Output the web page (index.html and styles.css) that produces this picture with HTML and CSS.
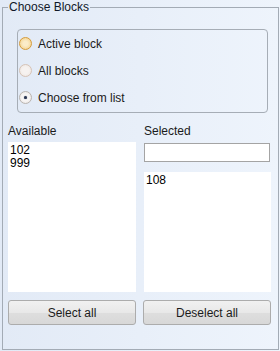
FILE: index.html
```html
<!DOCTYPE html>
<html lang="en">
<head>
    <meta charset="UTF-8">
    <title>Choose Blocks</title>
    <link rel="stylesheet" href="styles.css">
</head>
<body>
    <fieldset class="group">
        <legend>Choose Blocks</legend>

        <div class="options">
            <label class="opt"><span class="radio hot"></span>Active block</label>
            <label class="opt"><span class="radio"></span>All blocks</label>
            <label class="opt"><span class="radio on"></span>Choose from list</label>
        </div>

        <div class="lists">
            <div class="col">
                <div class="cap">Available</div>
                <div class="list tall">
                    <div>102</div>
                    <div>999</div>
                </div>
            </div>
            <div class="col">
                <div class="cap">Selected</div>
                <input class="filter" type="text">
                <div class="list fill">
                    <div>108</div>
                </div>
            </div>
        </div>

        <div class="btns">
            <button>Select all</button>
            <button>Deselect all</button>
        </div>
    </fieldset>
</body>
</html>
```

FILE: styles.css
```css
html, body{
    height: 100%;
}
body{
    margin: 0;
    padding: 0 1px 0 2px;
    box-sizing: border-box;
    background: linear-gradient(to right, #e2eaf6, #eef4fc);
    font-family: "Liberation Sans", Arial, sans-serif;
    font-size: 12px;
    color: #1b1b1b;
}

.group{
    margin: 0;
    height: 350px;
    box-sizing: border-box;
    border: 1px solid #a3abb5;
    padding: 0 7px 0 5px;
}
.group legend{
    padding: 0 1px;
    margin-left: 0;
    line-height: 15px;
    color: #101828;
}

.options{
    margin: 14px 3px 0 9px;
    border: 1px solid #a6adb6;
    border-radius: 4px;
    padding: 0 0 1px 0;
}
.opt{
    display: flex;
    align-items: center;
    height: 27px;
    padding-left: 1px;
}
.radio{
    width: 11px;
    height: 11px;
    border-radius: 50%;
    border: 1px solid #d6c3b6;
    background: radial-gradient(circle, #f6f2f0 40%, #ece4df);
    margin-right: 6px;
    position: relative;
}
.radio.hot{
    border-color: #d59c3c;
    background: radial-gradient(circle, #fbecc8 30%, #f1cc80);
}
.radio.on{
    border-color: #b9b4b0;
    background: radial-gradient(circle, #f7f5f4 45%, #e6e1de);
}
.radio.on::after{
    content: "";
    position: absolute;
    left: 4px;
    top: 4px;
    width: 3px;
    height: 3px;
    border-radius: 50%;
    background: #2c3650;
    box-shadow: 0 0 1px #4a5878;
}

.lists{
    display: grid;
    grid-template-columns: 128px 128px;
    column-gap: 7px;
    margin-top: 11px;
}
.col{
    display: flex;
    flex-direction: column;
}
.cap{
    line-height: 15px;
    margin-bottom: 3px;
}
.col + .col .cap{
    margin-left: 1px;
}
.list{
    background: #ffffff;
    color: #000000;
    padding: 2px 2px;
    line-height: 13px;
    box-sizing: border-box;
}
.list.tall{
    height: 150px;
}
.list.fill{
    flex: 1;
    margin-left: 1px;
}
.filter{
    height: 19px;
    box-sizing: border-box;
    margin: 1px 1px 10px 1px;
    border: 1px solid #a4a4a4;
    background: #ffffff;
    padding: 0;
}

.btns{
    display: grid;
    grid-template-columns: 128px 128px;
    column-gap: 7px;
    margin-top: 8px;
}
.btns button{
    height: 25px;
    border: 1px solid #acacac;
    border-radius: 3px;
    background: linear-gradient(#f1f1f1, #e8e8e8 50%, #dedede 50%, #d8d8d8);
    font-family: inherit;
    font-size: 12px;
    color: #1b1b1b;
    padding: 0;
}
```
